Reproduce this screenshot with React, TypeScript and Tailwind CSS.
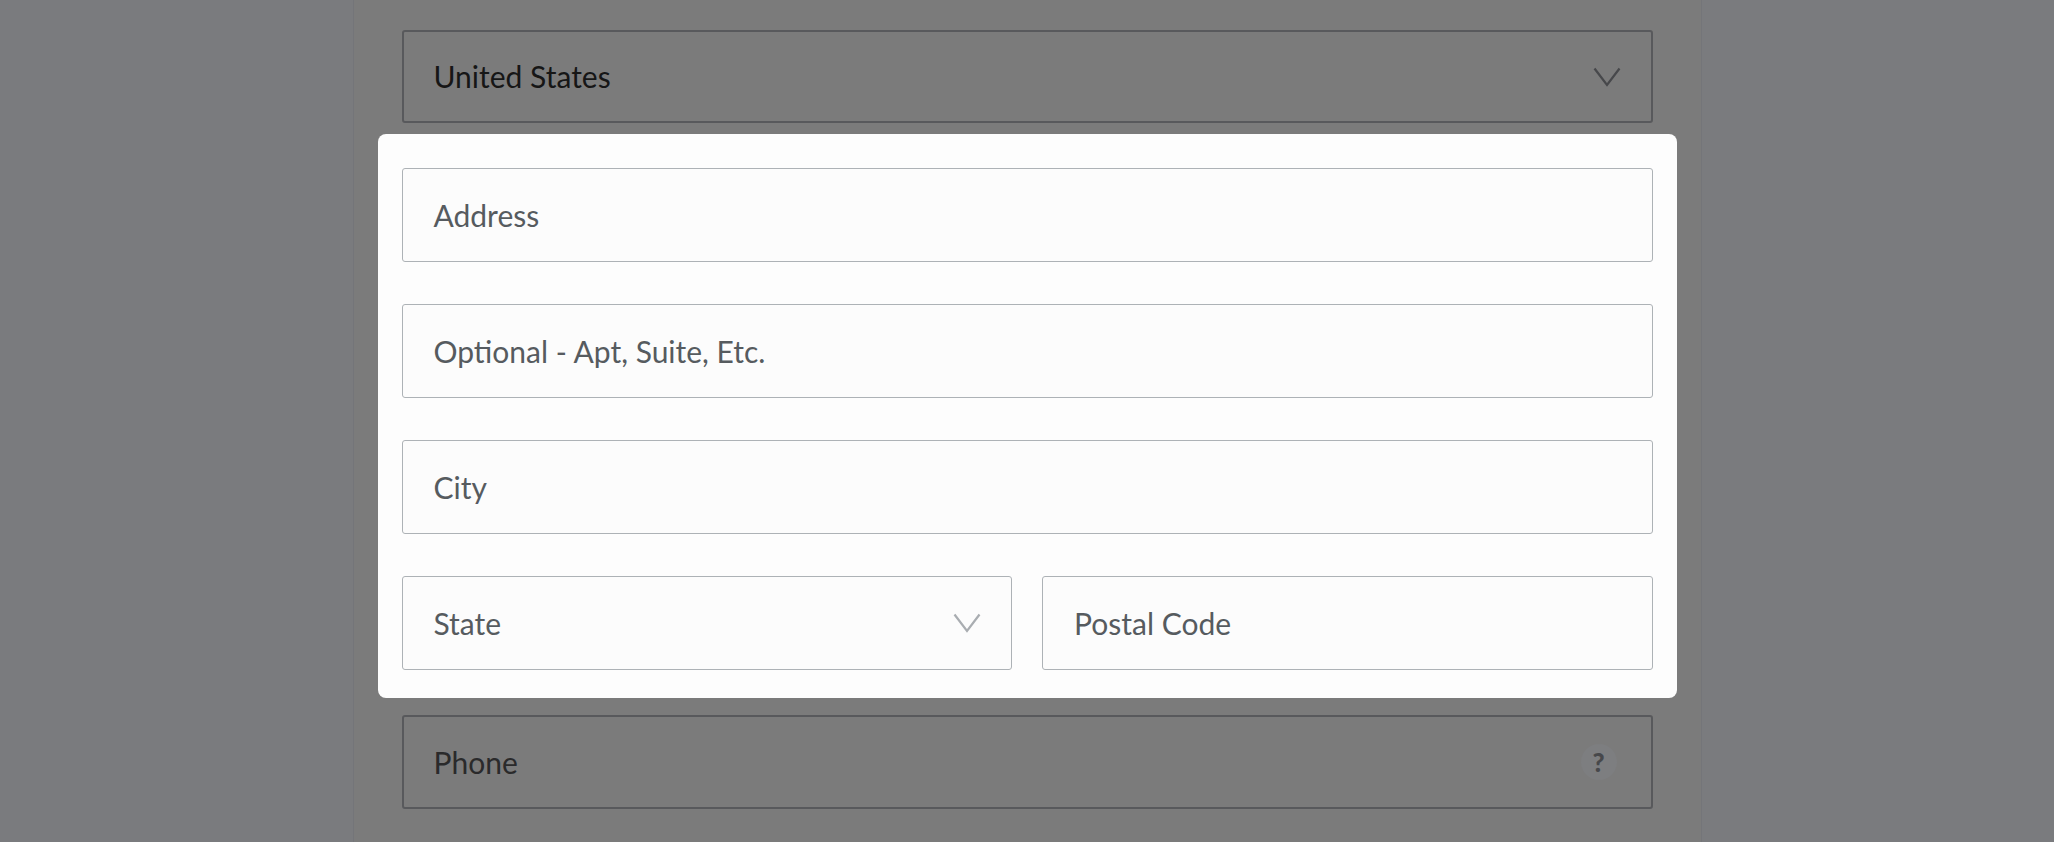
import React from "react";

function Chevron({ className }: { className?: string }) {
  return (
    <svg width="28" height="20" viewBox="0 0 28 20" fill="none" className={className}>
      <polyline points="1.5,1.5 14,18 26.5,1.5" stroke="currentColor" strokeWidth="2.2" />
    </svg>
  );
}

function Field({
  label,
  select,
  className = "",
}: {
  label: string;
  select?: boolean;
  className?: string;
}) {
  return (
    <div
      className={`flex h-[94px] items-center justify-between rounded-[3px] border border-[#adb2b6] bg-[#fcfcfc] pl-[31px] pr-[30px] ${className}`}
    >
      <span className="text-[30px] text-[#565b5f]">{label}</span>
      {select && <Chevron className="text-[#a9adb1]" />}
    </div>
  );
}

export default function App() {
  return (
    <div
      className="flex h-[842px] w-full justify-center overflow-hidden bg-[#7a7b7e]"
      style={{ fontFamily: "Lato, 'Liberation Sans', sans-serif" }}
    >
      <div className="w-[1349px] border-x border-[#747579] bg-[#7b7b7b] px-[48px] pt-[30px]">
        <div className="flex flex-col gap-[45px]">
          {/* Country (dimmed) */}
          <div className="flex h-[93px] items-center justify-between rounded-[3px] border-2 border-[#58595c] pl-[30px] pr-[30px]">
            <span className="text-[30px] text-[#161616]">United States</span>
            <Chevron className="text-[#47484b]" />
          </div>

          {/* Highlighted address group */}
          <div className="-mx-[24px] -mt-[34px] -mb-[28px] rounded-[8px] bg-[#fdfdfd] px-[24px] pt-[34px] pb-[28px]">
            <div className="flex flex-col gap-[42px]">
              <Field label="Address" />
              <Field label="Optional - Apt, Suite, Etc." />
              <Field label="City" />
              <div className="flex gap-[30px]">
                <Field label="State" select className="flex-1" />
                <Field label="Postal Code" className="flex-1" />
              </div>
            </div>
          </div>

          {/* Phone (dimmed) */}
          <div className="flex h-[94px] items-center justify-between rounded-[3px] border-2 border-[#58595c] pl-[30px] pr-[34px]">
            <span className="text-[30px] text-[#2a2a2b]">Phone</span>
            <span className="flex h-[36px] w-[36px] items-center justify-center rounded-full bg-[#7d7e80] text-[26px] font-black text-[#47484b]">
              ?
            </span>
          </div>
        </div>
      </div>
    </div>
  );
}
